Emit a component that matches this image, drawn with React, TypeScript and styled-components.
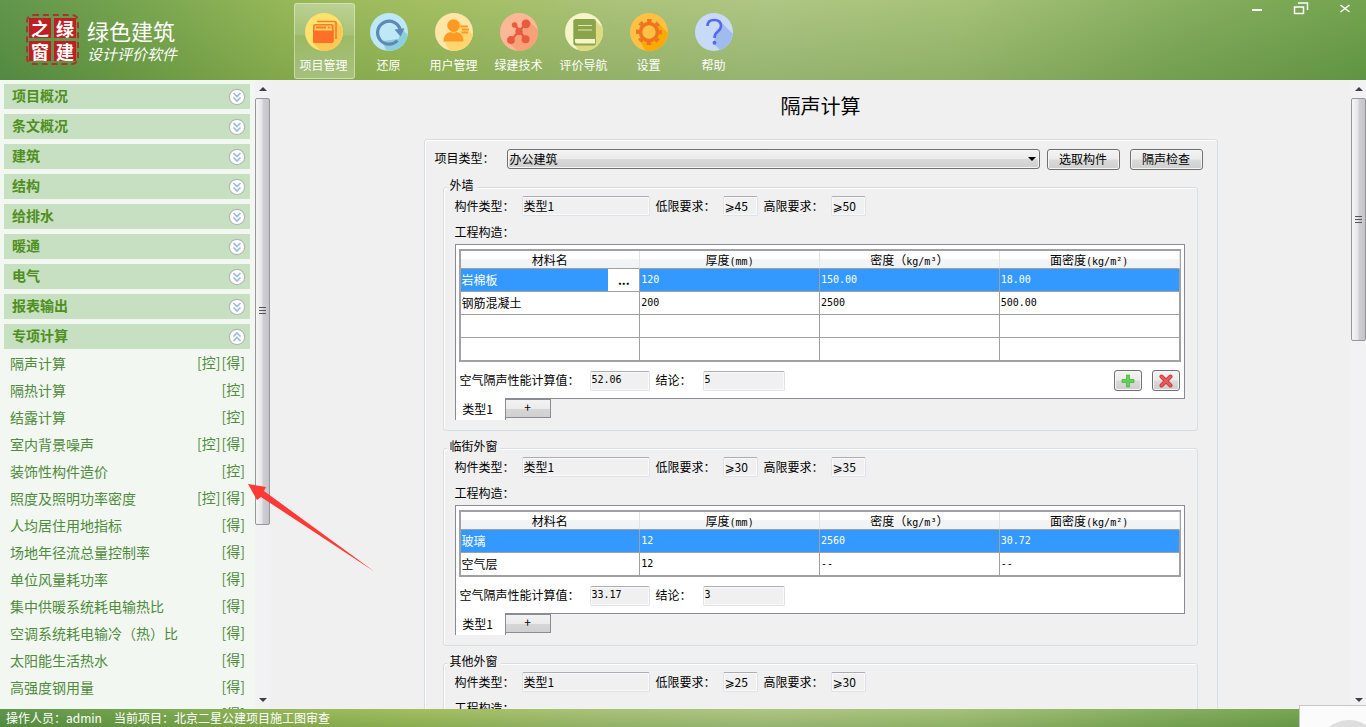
import React from 'react';
import styled, { createGlobalStyle, css } from 'styled-components';

const uiFont = `"Noto Sans CJK SC", "DejaVu Sans", sans-serif`;
const monoFont = `"DejaVu Sans Mono", "Noto Sans CJK SC", monospace`;

const GlobalStyle = createGlobalStyle`
  *, *::before, *::after { box-sizing: border-box; }
  body {
    margin: 0;
    font-family: ${uiFont};
    font-size: 12px;
    line-height: 16px;
    color: #000;
    background: #f0f0f0;
  }
  button, input, select { font: inherit; color: inherit; margin: 0; }
`;

const barPaint = css`
  background:
    linear-gradient(to bottom, rgba(255, 255, 255, 0.04), rgba(20, 80, 30, 0.14)),
    linear-gradient(100deg, #5b9145 0%, #70a048 9%, #93b552 21%, #9fbc5a 31%, #a8c074 45%, #abc47e 56%, #a2bf72 70%, #82ab58 86%, #6c9f47 100%);
`;

const Shell = styled.div`
  position: relative;
  display: flex;
  flex-direction: column;
  height: 100vh;
  overflow: hidden;
`;

/* ---------- top bar ---------- */

const TopBar = styled.header`
  display: flex;
  flex: none;
  height: 80px;
  ${barPaint}
`;

const Brand = styled.div`
  display: flex;
  flex: none;
  align-items: flex-start;
  gap: 8px;
  width: 294px;
  padding: 14px 0 0 26px;
`;

const Seal = styled.div`
  display: grid;
  grid-template-columns: 22px 22px;
  grid-auto-rows: 20px;
  gap: 3px;
  padding: 2px 1px;
  border: 2px dashed #a4372f;
  border-radius: 7px;
`;

const SealMark = styled.span`
  display: flex;
  align-items: center;
  justify-content: center;
  background: #bd1f22;
  color: #fff;
  font-size: 18px;
  font-weight: 700;
  line-height: 20px;
`;

const BrandText = styled.div`
  color: #fff;
`;

const BrandName = styled.div`
  font-size: 22px;
  line-height: 32px;
`;

const BrandSub = styled.div`
  font-family: "Liberation Serif", "Noto Sans CJK SC", serif;
  font-size: 15px;
  font-style: italic;
  line-height: 18px;
`;

const Tools = styled.nav`
  display: flex;
  flex: 1;
  align-items: flex-start;
  gap: 4px;
  padding-top: 3px;
`;

const Tool = styled.button<{ $active?: boolean }>`
  display: flex;
  flex-direction: column;
  align-items: center;
  width: 61px;
  height: 76px;
  padding: 9px 2px 0 0;
  gap: 6px;
  border: 1px solid ${p => (p.$active ? 'rgba(230, 240, 205, 0.55)' : 'transparent')};
  border-radius: 3px;
  background: ${p => (p.$active
    ? 'linear-gradient(to bottom, rgba(255,255,255,.34), rgba(255,255,255,.2) 42%, rgba(255,255,255,.1) 43%, rgba(255,255,255,.28))'
    : 'none')};
  color: #fff;
  white-space: nowrap;

  svg { flex: none; }
`;

const WindowControls = styled.div`
  display: flex;
  flex: none;
  align-items: flex-start;
  gap: 24px;
  padding-right: 11px;
`;

const WindowButton = styled.button`
  width: 20px;
  height: 18px;
  padding: 0;
  border: 0;
  background: none;

  svg { display: block; }
`;

/* ---------- body ---------- */

const Body = styled.div`
  display: flex;
  flex: 1;
  min-height: 0;
`;

const Sidebar = styled.nav`
  flex: none;
  width: 255px;
  padding: 4px 5px 0 4px;
  overflow: hidden;
  background: #f2f7f2;
`;

const Group = styled.button`
  display: flex;
  align-items: center;
  justify-content: space-between;
  width: 100%;
  height: 25px;
  margin-bottom: 5px;
  padding: 0 4px 0 8px;
  border: 0;
  background: #c7e0c1;
  color: #4f8f1d;
  font-size: 14px;
  font-weight: 700;
  line-height: 20px;
`;

const GroupName = styled.span`
  padding-bottom: 3px;
`;

const ItemList = styled.ul`
  list-style: none;
  margin: -5px 0 0;
  padding: 0;
`;

const Item = styled.li`
  display: flex;
  align-items: center;
  justify-content: space-between;
  height: 27px;
  padding: 0 5px 0 6px;
  font-size: 14px;
  color: #4f8b3c;
`;

const ItemLink = styled.a`
  color: inherit;
  text-decoration: none;
`;

const Tags = styled.span`
  display: flex;
  gap: 1px;
  padding-bottom: 2px;
`;

/* ---------- scroll bars ---------- */

const Track = styled.div`
  display: flex;
  flex: none;
  flex-direction: column;
  width: 15px;
  background: #f2f2f4;
`;

const TrackEnd = styled.span`
  display: flex;
  flex: none;
  align-items: center;
  justify-content: center;
  height: 18px;
`;

const Lane = styled.div`
  flex: 1;
  min-height: 0;
`;

const Thumb = styled.div<{ $size: number }>`
  display: flex;
  align-items: center;
  justify-content: center;
  height: ${p => p.$size}%;
  border: 1px solid #97979b;
  border-radius: 2px;
  background: linear-gradient(to right, #f6f6f7, #e6e6e8 45%, #cfcfd3 55%, #c3c3c9);
`;

/* ---------- content ---------- */

const Content = styled.main`
  display: flex;
  flex: 1;
  flex-direction: column;
  align-items: center;
  min-width: 0;
  padding: 11px 20px 0 40px;
  overflow: hidden;
`;

const Title = styled.h1`
  flex: none;
  margin: 0 0 18px;
  font-size: 20px;
  font-weight: 400;
  line-height: 30px;
`;

const Panel = styled.section`
  flex: none;
  width: 100%;
  max-width: 794px;
  padding: 9px 19px 20px 18px;
  border: 1px solid #d5dfe5;
  border-radius: 3px;
  box-shadow: inset 1px 1px 0 #fff;
`;

const ProjectRow = styled.div`
  display: flex;
  align-items: flex-start;
  height: 21px;
  margin: 0 -5px 9px -8px;
`;

const raised = css`
  border: 1px solid #707070;
  border-radius: 3px;
  background: linear-gradient(to bottom, #f3f3f3, #ebebeb 48%, #dadada 52%, #cecece);
  box-shadow: inset 0 0 0 1px #f6f6f6;
`;

const PushButton = styled.button`
  ${raised}
  flex: none;
  width: 73px;
  height: 21px;
  padding: 0 0 2px;
`;

const SquareButton = styled.button`
  ${raised}
  display: flex;
  align-items: center;
  justify-content: center;
  width: 28px;
  height: 21px;
  padding: 0;
`;

const ButtonPair = styled.div`
  display: flex;
  gap: 10px;
  margin-left: 7px;
`;

const SelectBox = styled.div`
  display: grid;
  flex: 1;
  align-items: center;

  > * { grid-area: 1 / 1; }
  svg { justify-self: end; margin-right: 4px; pointer-events: none; }
`;

const Select = styled.select`
  ${raised}
  width: 100%;
  height: 20px;
  padding: 0 20px 0 2px;
  line-height: 16px;
  appearance: none;
`;

const Label = styled.label<{ $w: number }>`
  flex: none;
  width: ${p => p.$w}px;
  padding: 1px 0 2px;
  white-space: nowrap;
`;

const Section = styled.fieldset`
  min-width: 0;
  margin: 0 0 9px;
  padding: 1px 12px 10px 11px;
  border: 1px solid #d5dfe5;
  border-radius: 3px;
  box-shadow: inset 1px 1px 0 #fff;
`;

const Legend = styled.legend`
  margin-left: -8px;
  padding: 0 3px 4px;
  background: #f0f0f0;
  line-height: 12px;
`;

const FieldRow = styled.div`
  display: flex;
  align-items: center;
  gap: 6px;
  height: 20px;
`;

const Field = styled.div`
  display: flex;
  align-items: center;
`;

const TextBox = styled.input<{ $w: number; $mono?: boolean }>`
  width: ${p => p.$w}px;
  height: 20px;
  padding: 0 2px 2px 1px;
  border: 1px solid #e0e2ea;
  border-top-color: #abadb3;
  border-radius: 2px;
  background: #f0f0f0;
  box-shadow: inset 0 0 0 1px #fafafa;
  ${p => p.$mono && css`font-family: ${monoFont}; font-size: 10px;`}
`;

const Caption = styled.div`
  margin: 8px 0 4px;
`;

const Sheet = styled.div`
  padding: 4px 3px 7px 3px;
  border: 1px solid #898c95;
  background: #fff;
`;

const Grid = styled.table`
  width: 100%;
  border: 1px solid #a0a0a5;
  border-width: 2px 1px 1px 2px;
  border-spacing: 0;
  table-layout: fixed;
`;

const HeadCell = styled.th`
  height: 18px;
  padding: 0;
  border-right: 1px solid #e2e3e6;
  border-bottom: 1px solid #a0a0a0;
  background: linear-gradient(to bottom, #fff 45%, #f3f4f6 50%, #f1f2f4);
  font-weight: 400;
  line-height: 16px;
`;

const Latin = styled.span`
  font-family: ${monoFont};
  font-size: 10px;
  line-height: 12px;
`;

const Cell = styled.td<{ $on?: boolean; $mono?: boolean }>`
  height: 23px;
  padding: 0 0 0 1px;
  border-right: 1px solid #a0a0a0;
  border-bottom: 1px solid #a0a0a0;
  background: ${p => (p.$on ? '#3399ff' : '#fff')};
  color: ${p => (p.$on ? '#fff' : '#000')};
  ${p => p.$mono && css`font-family: ${monoFont}; font-size: 10px;`}
`;

const Editing = styled.div`
  display: flex;
  align-items: center;
  justify-content: space-between;
  height: 22px;
`;

const MoreButton = styled.button`
  width: 31px;
  height: 22px;
  padding: 0;
  border: 0;
  background: #fff;
  color: #000;
  font-weight: 700;
`;

const ResultRow = styled.div`
  display: flex;
  align-items: center;
  justify-content: space-between;
  height: 21px;
  margin: 8px 1px 0;
`;

const TabRow = styled.div`
  display: flex;
  align-items: flex-start;
  height: 21px;
`;

const Tab = styled.button<{ $active?: boolean }>`
  padding: 0;
  border: 1px solid #898c95;
  ${p => (p.$active
    ? css`
      width: 51px;
      height: 22px;
      margin-top: -1px;
      padding-right: 5px;
      border-width: 0 1px 0 1px;
      background: #fff;
    `
    : css`
      width: 45px;
      height: 19px;
      padding-bottom: 3px;
      border-left: 0;
      background: linear-gradient(to bottom, #f3f3f3, #ebebeb 50%, #d6d6d6 55%, #d0d0d0);
      line-height: 14px;
    `)}
`;

const StatusBar = styled.footer`
  display: flex;
  flex: none;
  align-items: center;
  gap: 12px;
  height: 18px;
  padding-left: 6px;
  color: #fff;
  ${barPaint}
`;

/* A red pointer and a tray notice float over the page. */
const Pointer = styled.svg`
  position: absolute;
  left: 248px;
  top: 484px;
  pointer-events: none;
`;

const TrayNotice = styled.div`
  position: absolute;
  right: 0;
  bottom: 0;
  width: 67px;
  height: 22px;
  border: 1px solid #c6c6c6;
  border-width: 1px 0 0 1px;
  background: #fbfbfb;
  overflow: hidden;

  svg { display: block; }
`;

/* ---------- drawings ---------- */

function Disc({ id, base, shade, shadow, children }: {
  id: string; base: string; shade: string; shadow: string; children: React.ReactNode;
}) {
  return (
    <svg width="38" height="38" viewBox="0 0 38 38" aria-hidden="true">
      <clipPath id={id}><circle cx="19" cy="19" r="19" /></clipPath>
      <circle cx="19" cy="19" r="19" fill={base} />
      <path d={shadow} fill={shade} clipPath={`url(#${id})`} />
      {children}
    </svg>
  );
}

const toolIcons = {
  project: (
    <Disc id="d1" base="#fee26b" shade="#fdc954" shadow="M31 8L46 23V46H24L8 30Z">
      <path d="M12 8.500h17.500q1.500 0 1.500 1.500v16" fill="none" stroke="#fb7a2c" strokeWidth="1.600" />
      <rect x="8.800" y="11.800" width="19" height="17.500" rx="1.500" fill="#fed25c" stroke="#fb7a2c" strokeWidth="1.600" />
      <path d="M8 17.500h20.600v11q0 1.500-1.500 1.500H9.500Q8 30 8 28.500z" fill="#fd702a" />
      <path d="M11 14.500h10M23 14.500h1.500M25.500 14.500h1" stroke="#fb7a2c" strokeWidth="1.800" />
    </Disc>
  ),
  restore: (
    <Disc id="d2" base="#bfe8f6" shade="#8ccfdd" shadow="M33 17L46 30V46H20L12 28L28 26Z">
      <path d="M27.500 27.500A11.500 11.500 0 1 1 30.300 17" fill="none" stroke="#5f88b6" strokeWidth="3.200" />
      <path d="M24.500 16.500L34.500 15.300L30.500 23.500Z" fill="#5f88b6" />
    </Disc>
  ),
  user: (
    <Disc id="d3" base="#ffe6a6" shade="#fed671" shadow="M24 8L46 30V46H20L9 28Z">
      <circle cx="18.500" cy="12.500" r="6.300" fill="#fe9a23" />
      <path d="M8.500 28.500q0-8.500 7-9.500l3 1.500 3-1.500q7 1 7 9.500z" fill="#fe9a23" />
      <path d="M25.500 13.500H33M27 16.500h7M26.500 19.500H33" stroke="#fe9a23" strokeWidth="2" />
    </Disc>
  ),
  tech: (
    <Disc id="d4" base="#fcb795" shade="#f8a077" shadow="M30 9L46 25V46H26L9 30Z">
      <path d="M15 12L25.500 26M26 10.500L11 27" stroke="#ea5a41" strokeWidth="2.200" />
      <circle cx="19" cy="18.300" r="3.600" fill="#ea5a41" />
      <circle cx="26" cy="10.800" r="4.400" fill="#ea5a41" />
      <circle cx="14.600" cy="12" r="2.800" fill="#ea5a41" />
      <circle cx="11" cy="27" r="3.900" fill="#ea5a41" />
      <circle cx="25.600" cy="26.300" r="4" fill="#ea5a41" />
    </Disc>
  ),
  guide: (
    <Disc id="d5" base="#f5f5c9" shade="#dddb82" shadow="M31 8L46 23V46H20L9 31Z">
      <rect x="8.300" y="6" width="22.600" height="26.500" rx="2.500" fill="#89a44b" />
      <path d="M13 12.500h14M13 17h14" stroke="#e3e8b4" strokeWidth="1.200" />
      <path d="M10 26h20v4.500H12q-2 0-2-2z" fill="#f5f5c9" />
    </Disc>
  ),
  settings: (
    <Disc id="d6" base="#fec143" shade="#f9ab04" shadow="M28 10L46 28V46H20L10 28Z">
      <circle cx="19" cy="19" r="11.500" fill="none" stroke="#ef7420" strokeWidth="3" strokeDasharray="4.500 4.530" strokeDashoffset="2.250" />
      <circle cx="19" cy="19" r="8.500" fill="#fec143" stroke="#ef7420" strokeWidth="3.600" />
    </Disc>
  ),
  help: (
    <Disc id="d7" base="#c9d9f8" shade="#a0bcee" shadow="M26 9L46 29V46H34L19 31L20 22L27 15Z">
      <path d="M12.500 13q0-6 6.700-6 6.800 0 6.800 6 0 3-3.200 5.500-3.300 2.500-3.300 6.500" fill="none" stroke="#5369ee" strokeWidth="2.600" />
      <circle cx="19.500" cy="29.800" r="2" fill="#5369ee" />
    </Disc>
  ),
};

function Chevrons({ up }: { up?: boolean }) {
  return (
    <svg width="18" height="18" viewBox="0 0 18 18" aria-hidden="true">
      <circle cx="9" cy="9" r="7.700" fill="#fff" stroke="#b4b9b4" strokeWidth="1.200" />
      <path
        d={up ? 'M5.500 8.500L9 5l3.500 3.500M5.500 13L9 9.500l3.500 3.500' : 'M5.500 5L9 8.500 12.500 5M5.500 9.500L9 13l3.500-3.500'}
        fill="none" stroke="#9dbbdc" strokeWidth="1.700"
      />
    </svg>
  );
}

function ScrollBar({ size }: { size: number }) {
  return (
    <Track aria-hidden="true">
      <TrackEnd><svg width="8" height="4"><path d="M0 4L4 0l4 4z" fill="#404040" /></svg></TrackEnd>
      <Lane>
        <Thumb $size={size}>
          <svg width="7" height="8"><path d="M0 .5h7M0 3.500h7M0 6.500h7" stroke="#55555a" /></svg>
        </Thumb>
      </Lane>
      <TrackEnd><svg width="8" height="4"><path d="M0 0h8L4 4z" fill="#404040" /></svg></TrackEnd>
    </Track>
  );
}

/* ---------- data ---------- */

const tools: { key: keyof typeof toolIcons; label: string }[] = [
  { key: 'project', label: '项目管理' },
  { key: 'restore', label: '还原' },
  { key: 'user', label: '用户管理' },
  { key: 'tech', label: '绿建技术' },
  { key: 'guide', label: '评价导航' },
  { key: 'settings', label: '设置' },
  { key: 'help', label: '帮助' },
];

const groups = ['项目概况', '条文概况', '建筑', '结构', '给排水', '暖通', '电气', '报表输出', '专项计算'];

const items: [string, string[]][] = [
  ['隔声计算', ['[控]', '[得]']],
  ['隔热计算', ['[控]']],
  ['结露计算', ['[控]']],
  ['室内背景噪声', ['[控]', '[得]']],
  ['装饰性构件造价', ['[控]']],
  ['照度及照明功率密度', ['[控]', '[得]']],
  ['人均居住用地指标', ['[得]']],
  ['场地年径流总量控制率', ['[得]']],
  ['单位风量耗功率', ['[得]']],
  ['集中供暖系统耗电输热比', ['[得]']],
  ['空调系统耗电输冷（热）比', ['[得]']],
  ['太阳能生活热水', ['[得]']],
  ['高强度钢用量', ['[得]']],
  ['', ['[得]']],
];

interface Part {
  id: string;
  name: string;
  low: string;
  high: string;
  rows: string[][];
  value: string;
  verdict: string;
  editable?: boolean;
}

const parts: Part[] = [
  {
    id: 'wall', name: '外墙', low: '⩾45', high: '⩾50', value: '52.06', verdict: '5', editable: true,
    rows: [['岩棉板', '120', '150.00', '18.00'], ['钢筋混凝土', '200', '2500', '500.00'], ['', '', '', ''], ['', '', '', '']],
  },
  {
    id: 'street', name: '临街外窗', low: '⩾30', high: '⩾35', value: '33.17', verdict: '3',
    rows: [['玻璃', '12', '2560', '30.72'], ['空气层', '12', '--', '--']],
  },
  {
    id: 'other', name: '其他外窗', low: '⩾25', high: '⩾30', value: '', verdict: '',
    rows: [['', '', '', '']],
  },
];

function PartSection({ part }: { part: Part }) {
  const { id } = part;
  return (
    <Section>
      <Legend>{part.name}</Legend>
      <FieldRow>
        <Field><Label $w={67} htmlFor={`${id}-type`}>构件类型：</Label><TextBox $w={128} id={`${id}-type`} readOnly value="类型1" /></Field>
        <Field><Label $w={67} htmlFor={`${id}-low`}>低限要求：</Label><TextBox $w={35} id={`${id}-low`} readOnly value={part.low} /></Field>
        <Field><Label $w={67} htmlFor={`${id}-high`}>高限要求：</Label><TextBox $w={35} id={`${id}-high`} readOnly value={part.high} /></Field>
      </FieldRow>
      <Caption>工程构造：</Caption>
      <Sheet>
        <Grid>
          <thead>
            <tr>
              <HeadCell>材料名</HeadCell>
              <HeadCell>厚度<Latin>(mm)</Latin></HeadCell>
              <HeadCell>密度（<Latin>kg/m³</Latin>）</HeadCell>
              <HeadCell>面密度<Latin>(kg/m²)</Latin></HeadCell>
            </tr>
          </thead>
          <tbody>
            {part.rows.map((row, r) => (
              <tr key={r}>
                {row.map((text, c) => (
                  <Cell key={c} $on={r === 0} $mono={c > 0}>
                    {part.editable && r === 0 && c === 0
                      ? <Editing>{text}<MoreButton type="button">...</MoreButton></Editing>
                      : text}
                  </Cell>
                ))}
              </tr>
            ))}
          </tbody>
        </Grid>
        <ResultRow>
          <FieldRow>
            <Field><Label $w={130} htmlFor={`${id}-value`}>空气隔声性能计算值：</Label><TextBox $w={60} $mono id={`${id}-value`} readOnly value={part.value} /></Field>
            <Field><Label $w={47} htmlFor={`${id}-verdict`}>结论：</Label><TextBox $w={82} $mono id={`${id}-verdict`} readOnly value={part.verdict} /></Field>
          </FieldRow>
          {part.editable && (
            <ButtonPair>
              <SquareButton type="button" aria-label="添加">
                <svg width="14" height="14"><path d="M5.500 1h3v4.500H13v3H8.500V13h-3V8.500H1v-3h4.500z" fill="#5fd354" stroke="#4cb443" strokeWidth=".8" /></svg>
              </SquareButton>
              <SquareButton type="button" aria-label="删除">
                <svg width="14" height="14"><path d="M2.500 2.500l9 9M11.500 2.500l-9 9" stroke="#c9393b" strokeWidth="4" strokeLinecap="round" /><path d="M2.500 2.500l9 9M11.500 2.500l-9 9" stroke="#ea5c5e" strokeWidth="2.200" strokeLinecap="round" /></svg>
              </SquareButton>
            </ButtonPair>
          )}
        </ResultRow>
      </Sheet>
      <TabRow>
        <Tab type="button" $active>类型1</Tab>
        <Tab type="button">+</Tab>
      </TabRow>
    </Section>
  );
}

export default function App() {
  return (
    <Shell>
      <GlobalStyle />
      <TopBar>
        <Brand>
          <Seal>
            <SealMark>之</SealMark>
            <SealMark>绿</SealMark>
            <SealMark>窗</SealMark>
            <SealMark>建</SealMark>
          </Seal>
          <BrandText>
            <BrandName>绿色建筑</BrandName>
            <BrandSub>设计评价软件</BrandSub>
          </BrandText>
        </Brand>
        <Tools>
          {tools.map((t, i) => (
            <Tool key={t.key} type="button" $active={i === 0}>
              {toolIcons[t.key]}
              {t.label}
            </Tool>
          ))}
        </Tools>
        <WindowControls>
          <WindowButton type="button" aria-label="最小化">
            <svg width="20" height="18"><path d="M5 10h10" stroke="#fff" strokeWidth="2" /></svg>
          </WindowButton>
          <WindowButton type="button" aria-label="还原窗口">
            <svg width="20" height="18" fill="none" stroke="#fff"><path d="M3.500 7h9v6.500h-9z" strokeWidth="1.500" /><path d="M7 3h9.500v7" strokeWidth="1.500" /></svg>
          </WindowButton>
          <WindowButton type="button" aria-label="关闭">
            <svg width="20" height="18"><path d="M5.500 5l9 7M14.500 5l-9 7" stroke="#fff" strokeWidth="1.500" /></svg>
          </WindowButton>
        </WindowControls>
      </TopBar>

      <Body>
        <Sidebar>
          {groups.map((g, i) => (
            <Group key={g} type="button">
              <GroupName>{g}</GroupName>
              <Chevrons up={i === groups.length - 1} />
            </Group>
          ))}
          <ItemList>
            {items.map(([name, tags]) => (
              <Item key={name}>
                <ItemLink href="#">{name}</ItemLink>
                <Tags>{tags.map(t => <span key={t}>{t}</span>)}</Tags>
              </Item>
            ))}
          </ItemList>
        </Sidebar>
        <ScrollBar size={72} />

        <Content>
          <Title>隔声计算</Title>
          <Panel>
            <ProjectRow>
              <Label $w={72} htmlFor="project-type">项目类型：</Label>
              <SelectBox>
                <Select id="project-type" defaultValue="office">
                  <option value="office">办公建筑</option>
                </Select>
                <svg width="8" height="4" aria-hidden="true"><path d="M0 0h8L4 4z" /></svg>
              </SelectBox>
              <ButtonPair>
                <PushButton type="button">选取构件</PushButton>
                <PushButton type="button">隔声检查</PushButton>
              </ButtonPair>
            </ProjectRow>
            {parts.map(p => <PartSection key={p.id} part={p} />)}
          </Panel>
        </Content>
        <ScrollBar size={41} />
      </Body>

      <StatusBar>
        <span>操作人员：admin</span>
        <span>当前项目：北京二星公建项目施工图审查</span>
      </StatusBar>

      <Pointer width="127" height="88" viewBox="0 0 127 88" aria-hidden="true">
        <path d="M0 0L18 3L16 7L127 88L13 13L9 16Z" fill="#fd3a36" />
      </Pointer>
      <TrayNotice>
        <svg width="66" height="21" aria-hidden="true"><circle cx="49" cy="46" r="32" fill="#dedede" /></svg>
      </TrayNotice>
    </Shell>
  );
}
